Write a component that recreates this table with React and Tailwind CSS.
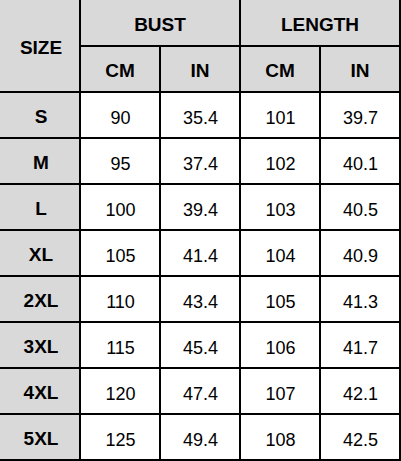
import { Fragment } from "react";

const rows = [
  ["S", "90", "35.4", "101", "39.7"],
  ["M", "95", "37.4", "102", "40.1"],
  ["L", "100", "39.4", "103", "40.5"],
  ["XL", "105", "41.4", "104", "40.9"],
  ["2XL", "110", "43.4", "105", "41.3"],
  ["3XL", "115", "45.4", "106", "41.7"],
  ["4XL", "120", "47.4", "107", "42.1"],
  ["5XL", "125", "49.4", "108", "42.5"],
];

const head = "bg-[#d9d9d9] flex items-center justify-center pt-[5px] font-bold text-[19px] text-black";
const cell = "bg-white flex items-center justify-center pt-[6px] text-[18px] text-black";

export default function App() {
  return (
    <div
      className="w-[401px] h-[461px] bg-black pr-[2px] pb-[2px] grid grid-cols-[79px_repeat(4,78px)] grid-rows-[45px_repeat(9,44px)] gap-[2px]"
      style={{ fontFamily: '"Liberation Sans", Arial, sans-serif' }}
    >
      <div className={`${head} row-span-2 pl-[3px]`}>SIZE</div>
      <div className={`${head} col-span-2`}>BUST</div>
      <div className={`${head} col-span-2`}>LENGTH</div>
      <div className={head}>CM</div>
      <div className={head}>IN</div>
      <div className={head}>CM</div>
      <div className={head}>IN</div>
      {rows.map((r) => (
        <Fragment key={r[0]}>
          <div className={`${head} pl-[3px]`}>{r[0]}</div>
          {r.slice(1).map((v, i) => (
            <div key={i} className={`${cell} pl-[1px]`}>{v}</div>
          ))}
        </Fragment>
      ))}
    </div>
  );
}
